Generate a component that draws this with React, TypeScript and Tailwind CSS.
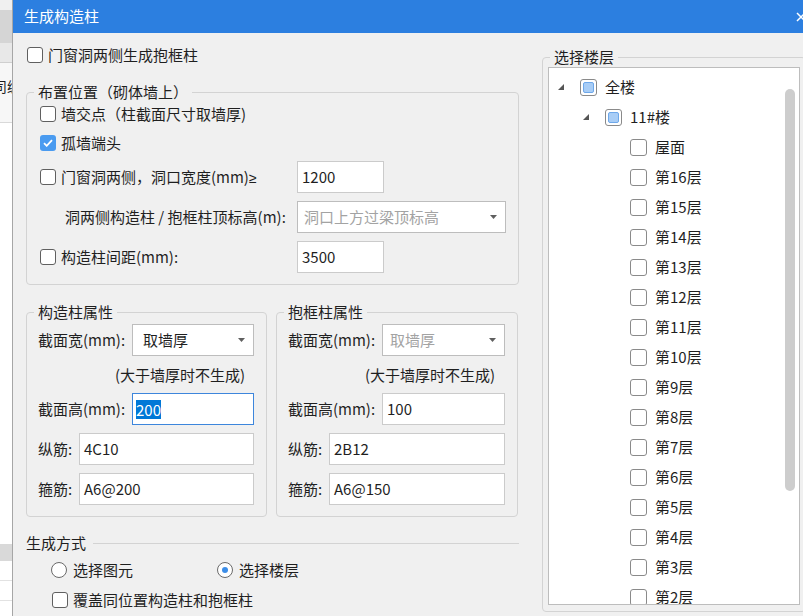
import React from "react";

const Check = ({ checked = false }: { checked?: boolean }) =>
  checked ? (
    <span className="flex h-4 w-4 shrink-0 items-center justify-center rounded-[3px] bg-[#4a9bf0]">
      <svg width="10" height="8" viewBox="0 0 10 8">
        <path d="M1 4.2 3.7 6.8 9 1.2" fill="none" stroke="#fff" strokeWidth="1.8" />
      </svg>
    </span>
  ) : (
    <span className="h-4 w-4 shrink-0 rounded-[3px] border border-[#606060] bg-white" />
  );

const Radio = ({ on = false }: { on?: boolean }) => (
  <span className="flex h-4 w-4 shrink-0 items-center justify-center rounded-full border border-[#6a6a6a] bg-white">
    {on && <span className="h-[6px] w-[6px] rounded-full bg-[#3d8ee8]" />}
  </span>
);

const Caret = () => (
  <svg width="7" height="4" viewBox="0 0 7 4">
    <path d="M0 0h7L3.5 4z" fill="#5f5f5f" />
  </svg>
);

const TextBox = ({ value, className = "" }: { value: string; className?: string }) => (
  <div className={`flex h-8 items-center border border-[#cbcbcb] bg-white px-[4px] ${className}`}>{value}</div>
);

const Combo = ({ value, muted = false, className = "" }: { value: string; muted?: boolean; className?: string }) => (
  <div className={`flex h-8 items-center justify-between border border-[#bdbdbd] bg-white pr-[8px] ${className}`}>
    <span className={muted ? "text-[#a3a3a3]" : ""}>{value}</span>
    <Caret />
  </div>
);

function Props({ title, width, combo, muted, height, zj, gj }: {
  title: string; width: string; combo: string; muted?: boolean; height: string; zj: string; gj: string;
}) {
  return (
    <fieldset className={`${width} rounded-[4px] border border-[#d3d3d3] pb-[11px] pl-[11px] pr-[12px]`}>
      <legend className="-ml-[4px] px-[4px] leading-[20px]">{title}</legend>
      <div className="mt-[2px] flex h-8 items-center">
        <span className="w-[94px] shrink-0">截面宽(mm):</span>
        <Combo value={combo} muted={muted} className={`flex-1 ${muted ? "pl-[7px]" : "pl-[10px]"}`} />
      </div>
      <div className="mt-[9px] h-5 pl-[77px] leading-[20px]">(大于墙厚时不生成)</div>
      <div className="mt-[8px] flex h-8 items-center">
        <span className="w-[94px] shrink-0">截面高(mm):</span>
        {height === "200" ? (
          <div className="flex h-8 flex-1 items-center border border-[#3d86dc] bg-white px-[3px]">
            <span className="bg-[#0078d7] leading-[19px] text-white">200</span>
          </div>
        ) : (
          <TextBox value={height} className="flex-1" />
        )}
      </div>
      <div className="mt-[8px] flex h-8 items-center">
        <span className="w-[41px] shrink-0">纵筋:</span>
        <TextBox value={zj} className="flex-1" />
      </div>
      <div className="mt-[8px] flex h-8 items-center">
        <span className="w-[41px] shrink-0">箍筋:</span>
        <TextBox value={gj} className="flex-1" />
      </div>
    </fieldset>
  );
}

const floors = ["屋面", ...Array.from({ length: 15 }, (_, i) => `第${16 - i}层`)];

function TreeRow({ level, label, expand, partial }: { level: 0 | 1 | 2; label: string; expand?: boolean; partial?: boolean }) {
  const pad = level === 0 ? "pl-[9px]" : level === 1 ? "pl-[34px]" : "pl-[59px]";
  return (
    <div className={`flex h-[30px] items-center ${pad}`}>
      <span className="flex w-[22px] shrink-0 items-center">
        {expand && (
          <svg width="6" height="6" viewBox="0 0 6 6">
            <path d="M6 0v6H0z" fill="#555" />
          </svg>
        )}
      </span>
      <span className="flex h-[17px] w-[17px] shrink-0 items-center justify-center rounded-[3px] border border-[#8a8a8a] bg-white">
        {partial && <span className="h-[11px] w-[11px] rounded-[2px] border border-[#6ea8ea] bg-[#a8cdf6]" />}
      </span>
      <span className="ml-[8px] whitespace-nowrap">{label}</span>
    </div>
  );
}

export default function App() {
  return (
    <div className="flex h-[616px] w-[803px] overflow-hidden bg-white font-['Noto_Sans_CJK_SC','Noto_Sans',sans-serif] text-[15px] text-[#1f1f1f]">
      {/* background app peeking out on the left */}
      <div className="flex w-[12px] shrink-0 flex-col overflow-hidden bg-white">
        <div className="h-[10px] bg-[#f0f0f0]" />
        <div className="h-[33px] bg-[#d5d5d5]" />
        <div className="h-[20px] border-b border-[#cfcfcf] bg-[#e8e8e8]" />
        <div className="h-[60px] border-b border-[#d9d9d9] bg-[#f7f7f7] pt-[13px]">
          <span className="-ml-[21px] block whitespace-nowrap text-[14px] leading-[20px]">公司编号</span>
        </div>
        <div className="h-[421px]" />
        <div className="h-[17px] bg-[#d9d9d9]" />
        <div className="h-[20px] border-b border-[#e2e2e2]" />
        <div className="h-[20px] border-b border-[#e2e2e2]" />
      </div>

      <div className="flex w-[810px] shrink-0 flex-col border-l border-[#a6a6a6] bg-[#f0f0f0]">
        <div className="flex h-[33px] shrink-0 items-center justify-between bg-[#2c7fe0] pl-[11px] pr-[16px] text-white">
          <span>生成构造柱</span>
          <svg width="10" height="10" viewBox="0 0 10 10">
            <path d="M1 1l8 8M9 1 1 9" stroke="#fff" strokeWidth="1.5" />
          </svg>
        </div>

        <div className="flex items-start pl-[13px]">
          {/* left column */}
          <div className="flex w-[493px] shrink-0 flex-col">
            <div className="ml-[1px] mt-[11px] flex h-[22px] items-center gap-[5px]">
              <Check />
              <span>门窗洞两侧生成抱框柱</span>
            </div>

            <fieldset className="mt-[16px] rounded-[4px] border border-[#d3d3d3] pb-[11px] pl-[13px] pr-[12px]">
              <legend className="-ml-[6px] px-[4px] leading-[20px]">布置位置（砌体墙上）</legend>
              <div className="flex h-6 items-center gap-[5px]">
                <Check />
                <span>墙交点（柱截面尺寸取墙厚)</span>
              </div>
              <div className="mt-[5px] flex h-6 items-center gap-[5px]">
                <Check checked />
                <span>孤墙端头</span>
              </div>
              <div className="mt-[6px] flex h-8 items-center">
                <span className="flex w-[257px] shrink-0 items-center gap-[5px]">
                  <Check />
                  <span>
                    门窗洞两侧，洞口宽度(mm)<span className="font-['Liberation_Sans',sans-serif] text-[14px]">≥</span>
                  </span>
                </span>
                <TextBox value="1200" className="w-[87px]" />
              </div>
              <div className="mt-[8px] flex h-8 items-center">
                <span className="w-[257px] shrink-0 whitespace-nowrap pl-[25px]">洞两侧构造柱 / 抱框柱顶标高(m):</span>
                <Combo value="洞口上方过梁顶标高" muted className="flex-1 pl-[6px]" />
              </div>
              <div className="mt-[8px] flex h-8 items-center">
                <span className="flex w-[257px] shrink-0 items-center gap-[5px]">
                  <Check />
                  <span>构造柱间距(mm):</span>
                </span>
                <TextBox value="3500" className="w-[87px]" />
              </div>
            </fieldset>

            <div className="mt-[17px] flex gap-[9px]">
              <Props title="构造柱属性" width="w-[241px]" combo="取墙厚" height="200" zj="4C10" gj="A6@200" />
              <Props title="抱框柱属性" width="w-[242px]" combo="取墙厚" muted height="100" zj="2B12" gj="A6@150" />
            </div>

            <div className="mt-[16px] flex h-5 items-center">
              <span>生成方式</span>
              <span className="ml-[7px] h-px flex-1 bg-[#d3d3d3]" />
            </div>
            <div className="mt-[7px] flex h-5 items-center pl-[25px]">
              <span className="flex w-[166px] items-center gap-[6px]">
                <Radio />
                <span>选择图元</span>
              </span>
              <span className="flex items-center gap-[6px]">
                <Radio on />
                <span>选择楼层</span>
              </span>
            </div>
            <div className="mt-[10px] flex h-5 items-center gap-[5px] pl-[26px]">
              <Check />
              <span>覆盖同位置构造柱和抱框柱</span>
            </div>
          </div>

          {/* right column */}
          <fieldset className="ml-[23px] mt-[14px] w-[264px] shrink-0 rounded-[4px] border border-[#d3d3d3] pb-[6px] pl-[5px] pr-[5px]">
            <legend className="ml-[2px] px-[4px] leading-[20px]">选择楼层</legend>
            <div className="relative h-[538px] overflow-hidden border border-[#bdbdbd] bg-white pt-[4px]">
              <TreeRow level={0} label="全楼" expand partial />
              <TreeRow level={1} label="11#楼" expand partial />
              {floors.map((f) => (
                <TreeRow key={f} level={2} label={f} />
              ))}
              <div className="absolute right-[4px] top-[21px] h-[402px] w-[10px] rounded-full bg-[#cdcdcd]" />
            </div>
          </fieldset>
        </div>
      </div>
    </div>
  );
}
